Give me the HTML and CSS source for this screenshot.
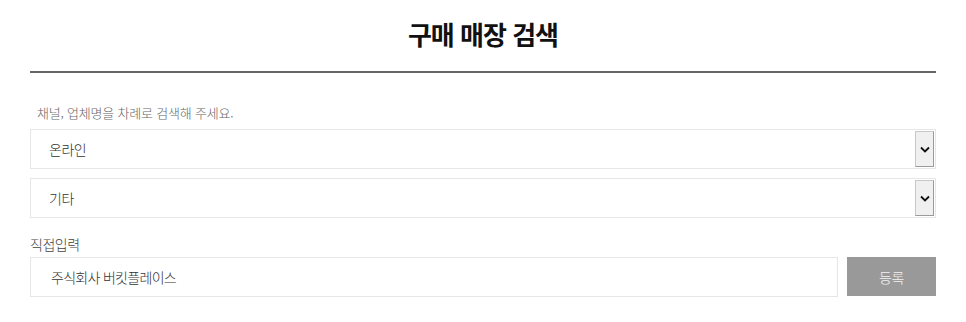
FILE: index.html
```html
<!DOCTYPE html>
<html lang="ko">
<head>
<meta charset="utf-8">
<title>구매 매장 검색</title>
<link rel="stylesheet" href="styles.css">
</head>
<body>
<div class="panel">
  <div class="panel-head">
    <h2 class="panel-title">구매 매장 검색</h2>
  </div>
  <p class="hint">채널, 업체명을 차례로 검색해 주세요.</p>
  <div class="select-box">
    <select class="select">
      <option>온라인</option>
    </select>
    <span class="select-arrow">
      <svg width="10" height="7" viewBox="0 0 10 7"><path d="M1 1.5 L5 5.5 L9 1.5" fill="none" stroke="#111" stroke-width="1.8"/></svg>
    </span>
  </div>
  <div class="select-box">
    <select class="select">
      <option>기타</option>
    </select>
    <span class="select-arrow">
      <svg width="10" height="7" viewBox="0 0 10 7"><path d="M1 1.5 L5 5.5 L9 1.5" fill="none" stroke="#111" stroke-width="1.8"/></svg>
    </span>
  </div>
  <label class="label">직접입력</label>
  <div class="input-row">
    <input class="text-input" type="text" value="주식회사 버킷플레이스">
    <button class="btn-submit" type="button">등록</button>
  </div>
</div>
</body>
</html>
```

FILE: styles.css
```css
* { box-sizing: border-box; }
html, body { margin: 0; padding: 0; background: #fff; }
body {
  font-family: "Noto Sans CJK KR", "Noto Sans", sans-serif;
  color: #333;
}
.panel {
  width: 966px;
  padding: 16px 30px 0;
}
.panel-head {
  height: 57px;
  border-bottom: 2px solid #666;
}
.panel-title {
  margin: 0;
  text-align: center;
  font-size: 26px;
  line-height: 36px;
  font-weight: 700;
  color: #111;
  letter-spacing: -1px;
}
.hint {
  margin: 31px 0 7px 7px;
  font-size: 13px;
  line-height: 18px;
  font-weight: 300;
  color: #666;
  letter-spacing: -0.2px;
}
.select-box {
  display: flex;
  align-items: center;
  height: 40px;
  border: 1px solid #e6e6e6;
  margin-bottom: 9px;
  padding: 1px;
}
.select {
  flex: 1;
  height: 100%;
  border: 0;
  outline: 0;
  appearance: none;
  -webkit-appearance: none;
  background: transparent;
  font-family: inherit;
  font-size: 14px;
  font-weight: 300;
  color: #333;
  padding: 0 0 0 17px;
  letter-spacing: -0.5px;
}
.select-arrow {
  width: 19px;
  height: 36px;
  display: flex;
  align-items: center;
  justify-content: center;
  background: #f0f0f0;
  border: 1px solid #9a9a9a;
  border-top-color: #c8c8c8;
  border-left-color: #c8c8c8;
}
.label {
  display: block;
  margin-top: 16px;
  font-size: 14px;
  line-height: 20px;
  font-weight: 300;
  color: #444;
  letter-spacing: -0.5px;
}
.input-row {
  display: flex;
  gap: 9px;
  margin-top: 3px;
}
.text-input {
  flex: 1;
  min-width: 0;
  height: 40px;
  border: 1px solid #e6e6e6;
  outline: 0;
  padding-top: 0;
  padding-bottom: 0;
  padding-right: 0;
  padding-left: 20px;
  font-family: inherit;
  font-size: 14px;
  font-weight: 300;
  color: #333;
  letter-spacing: -0.7px;
}
.btn-submit {
  width: 89px;
  height: 39px;
  border: 0;
  background: #999;
  color: #f2f2f2;
  font-family: inherit;
  font-size: 14px;
  font-weight: 300;
  letter-spacing: -0.5px;
}
```
